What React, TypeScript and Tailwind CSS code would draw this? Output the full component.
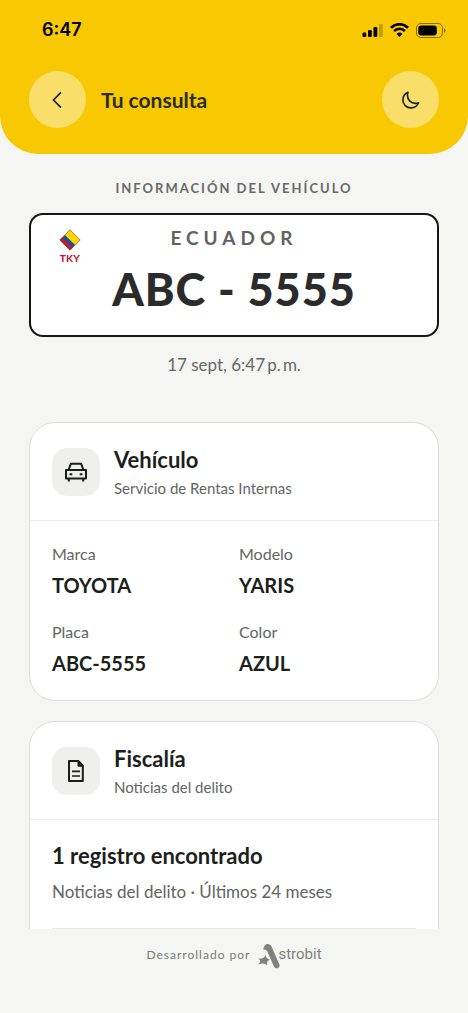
import type { ReactNode } from "react";

function StatusBar() {
  return (
    <div className="flex h-15 items-center justify-between pl-[42px] pr-[22px] text-black">
      <span className="font-['Inter'] text-[18px] leading-6 font-semibold">6:47</span>
      <div className="flex items-center gap-[7px]">
        <svg width="21" height="14" viewBox="0 0 21 14" fill="currentColor" aria-hidden="true">
          <rect x="0.5" y="9.5" width="3.8" height="4.500" rx="1.200" />
          <rect x="6" y="7" width="3.8" height="7" rx="1.200" />
          <rect x="11.500" y="4" width="3.8" height="10" rx="1.200" />
          <rect x="17" y="1" width="3.8" height="13" rx="1.200" opacity="0.22" />
        </svg>
        <svg width="19" height="14" viewBox="0 0 19 14" fill="none" stroke="currentColor" aria-hidden="true">
          <path d="M1 4.700a12.200 12.200 0 0 1 17 0" strokeWidth="2.700" />
          <path d="M4.100 8a7.800 7.800 0 0 1 10.800 0" strokeWidth="2.500" />
          <path d="M9.500 14 6.600 11a4.200 4.200 0 0 1 5.800 0z" fill="currentColor" stroke="none" />
        </svg>
        <svg width="30" height="15" viewBox="0 0 30 15" fill="none" aria-hidden="true">
          <rect x="0.500" y="0.500" width="26" height="14" rx="4.400" stroke="currentColor" opacity="0.450" />
          <rect x="2.300" y="2.600" width="18.500" height="9.800" rx="2.800" fill="currentColor" />
          <path d="M28 5.200c1.900.8 1.900 3.800 0 4.600z" fill="currentColor" opacity="0.500" />
        </svg>
      </div>
    </div>
  );
}

function RoundButton({ label, children }: { label: string; children: ReactNode }) {
  return (
    <button
      type="button"
      aria-label={label}
      className="flex size-[57px] shrink-0 items-center justify-center rounded-full bg-[#fade6a] text-[#1c1f14]"
    >
      {children}
    </button>
  );
}

function Header() {
  return (
    <header className="shrink-0 rounded-b-[38px] bg-[#f8c802] pb-[26px]">
      <StatusBar />
      <div className="mt-[11px] flex items-center px-[29px]">
        <RoundButton label="Volver">
          <svg width="20" height="20" viewBox="0 0 20 20" fill="none" stroke="currentColor" strokeWidth="1.700" strokeLinecap="round" strokeLinejoin="round" aria-hidden="true">
            <path d="M12.500 2.900 5.400 10l7.100 7.100" />
          </svg>
        </RoundButton>
        <h1 className="ml-[15px] flex-1 text-[21px] leading-7 font-bold text-[#2b2c10]">Tu consulta</h1>
        <RoundButton label="Modo oscuro">
          <svg width="20" height="20" viewBox="0 0 20 20" fill="none" stroke="currentColor" strokeWidth="1.600" strokeLinejoin="round" aria-hidden="true">
            <path d="M7 2.200C3.600 3.600 1.900 6.600 1.900 9.900c0 4.600 3.500 8 8 8 3.400 0 6.300-1.900 7.700-5.100-1 .4-2 .6-3.100.6-4.500 0-8-3.400-8-7.900 0-1.200.1-2.300.5-3.300z" />
          </svg>
        </RoundButton>
      </div>
    </header>
  );
}

function Plate() {
  return (
    <div className="relative mt-[15px] rounded-[14px] border-2 border-[#161616] bg-white pt-[11px] pb-[18px] text-center">
      <div className="absolute top-[14px] left-[28px] flex flex-col items-center">
        <svg width="22" height="22" viewBox="0 0 22 22" aria-hidden="true">
          <path d="M11 .8 21.200 11 11 21.200.8 11z" fill="#ffd400" />
          <path d="M5.900 5.900 16.100 16.100 11 21.200.8 11z" fill="#17509c" />
          <path d="M3.400 8.400 13.600 18.600 11 21.200.8 11z" fill="#ce1432" />
          <path d="M11 .8 21.200 11 11 21.200.8 11z" fill="none" stroke="#5f5a2c" strokeWidth=".7" />
        </svg>
        <span className="mt-px text-[10px] leading-3 font-black tracking-wide text-[#c4183c]">TKY</span>
      </div>
      <p className="text-[19px] leading-6 font-bold tracking-[5px] text-[#626262]">ECUADOR</p>
      <p className="mt-[11px] text-[45px] leading-14 font-black tracking-[1px] text-[#2b2b2b]">ABC - 5555</p>
    </div>
  );
}

function Card({ icon, title, subtitle, children }: { icon: ReactNode; title: string; subtitle: string; children: ReactNode }) {
  return (
    <section className="rounded-[26px] border border-[#dcdedb] bg-white">
      <div className="flex items-center gap-[14px] border-b border-[#ecedeb] px-[22px] pt-[23px] pb-[22px]">
        <div className="flex size-12 shrink-0 items-center justify-center rounded-[15px] bg-[#eff0ed] text-[#1a1d1a]">{icon}</div>
        <div>
          <h2 className="text-[22px] leading-7 font-bold text-[#1c1f1c]">{title}</h2>
          <p className="mt-1 text-[15px] leading-5 text-[#626562]">{subtitle}</p>
        </div>
      </div>
      {children}
    </section>
  );
}

const vehicle = [
  { label: "Marca", value: "TOYOTA" },
  { label: "Modelo", value: "YARIS" },
  { label: "Placa", value: "ABC-5555" },
  { label: "Color", value: "AZUL" },
];

function CarIcon() {
  return (
    <svg width="24" height="24" viewBox="0 0 24 24" fill="none" stroke="currentColor" strokeWidth="2" strokeLinejoin="round" aria-hidden="true">
      <path d="M2 10h20v8.500H2zM4.600 10l2.200-6.200h10.400l2.200 6.200" />
      <path d="M4.800 18.500v3M19.200 18.500v3" />
      <path d="M5.600 14.200h2.700M15.700 14.200h2.700" />
    </svg>
  );
}

function DocumentIcon() {
  return (
    <svg width="24" height="24" viewBox="0 0 24 24" fill="none" stroke="currentColor" strokeWidth="2" strokeLinejoin="round" aria-hidden="true">
      <path d="M5 2.100h9.500l4.300 4.500v15.300H5z" />
      <path d="M14 2.500v4.700h4.500z" fill="currentColor" strokeWidth="1" />
      <path d="M8 12.400h8M8 17h8" strokeWidth="1.700" />
    </svg>
  );
}

function AstrobitLogo() {
  return (
    <a href="#astrobit" aria-label="Astrobit" className="flex items-center text-[#80837b]">
      <svg width="22" height="26" viewBox="0 0 22 26" fill="currentColor" aria-hidden="true">
        <path d="M5.200 6.500C5.600 3 7.600 1 9.800 1c1.700 0 2.900.9 3.700 2.500l7.700 17.400c1 2.400-.5 4.400-2.400 4.400-1.400 0-2.400-.8-3.100-2.400L9.400 8.800C8.400 6.700 7 6.100 5.200 6.500z" />
        <path d="M7.800 11.500c.1 3 .9 4 4 5.200-2.600 1.300-3.100 2.400-2.600 5.900-2.200-2.400-4-2.700-8.700-1.200 2.400-2.700 2-3.900-.1-5.800 3.600.3 6-.2 7.400-4.100z" />
      </svg>
      <span className="-ml-0.5 pb-1 font-['Roboto'] text-[15px] leading-5">strobit</span>
    </a>
  );
}

export default function App() {
  return (
    <div className="flex h-screen flex-col bg-[#f5f5f3] font-['Lato','Liberation_Sans',sans-serif]">
      <Header />
      <main className="min-h-0 flex-1 overflow-hidden px-[29px] pt-6">
        <p className="text-center text-[13px] leading-5 font-bold tracking-[2px] text-[#686a67]">INFORMACIÓN DEL VEHÍCULO</p>
        <Plate />
        <p className="mt-4 text-center text-[17px] leading-6 text-[#666866]">17 sept, 6:47&#8201;p.&#8201;m.</p>
        <div className="mt-[45px] flex flex-col gap-5">
          <Card icon={<CarIcon />} title="Vehículo" subtitle="Servicio de Rentas Internas">
            <dl className="grid grid-cols-2 gap-x-[10px] gap-y-[21px] px-[22px] pt-[21px] pb-[23px]">
              {vehicle.map(({ label, value }) => (
                <div key={label}>
                  <dt className="text-base leading-6 text-[#626562]">{label}</dt>
                  <dd className="mt-[5px] text-xl leading-7 font-bold text-[#1c1f1c]">{value}</dd>
                </div>
              ))}
            </dl>
          </Card>
          <Card icon={<DocumentIcon />} title="Fiscalía" subtitle="Noticias del delito">
            <div className="px-[22px] pt-[22px]">
              <h3 className="text-[22px] leading-7 font-bold text-[#1c1f1c]">1 registro encontrado</h3>
              <p className="mt-[10px] text-[17px] leading-6 text-[#626562]">Noticias del delito · Últimos 24 meses</p>
              <div className="mt-6 h-10 border-t border-[#e8eae7]" />
            </div>
          </Card>
        </div>
      </main>
      <footer className="flex h-21 shrink-0 items-start justify-center gap-2 pt-[14px]">
        <span className="text-[12px] leading-6 tracking-[1px] text-[#777a75]">Desarrollado por</span>
        <AstrobitLogo />
      </footer>
    </div>
  );
}
